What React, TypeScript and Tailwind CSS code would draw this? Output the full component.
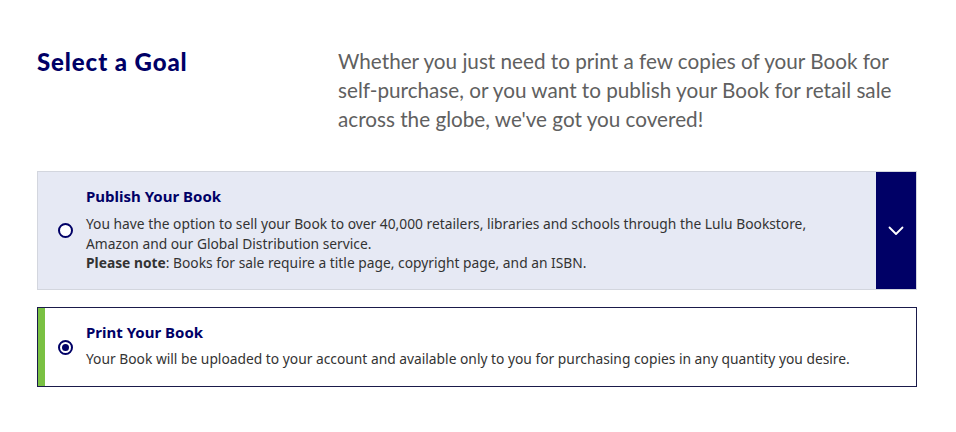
import React, { useState } from 'react';

const Radio: React.FC<{ checked: boolean }> = ({ checked }) => (
    <span className="flex h-[15px] w-[15px] items-center justify-center rounded-full border-2 border-[#000066] bg-white">
        {checked && <span className="h-[7px] w-[7px] rounded-full bg-[#000066]" />}
    </span>
);

const App: React.FC = () => {
    const [goal, setGoal] = useState<'publish' | 'print'>('print');

    return (
        <div className="min-h-[432px] bg-white pl-[37px] pr-[39px] pt-[47px] font-['Lato',sans-serif]">
            <header className="flex">
                <h1 className="w-[301px] shrink-0 pt-[1px] text-[24px] font-black leading-[28px] tracking-[0.9px] text-[#000066]">
                    Select a Goal
                </h1>
                <p className="w-[578px] text-[20.7px] leading-[29px] font-normal text-[#606060]">
                    Whether you just need to print a few copies of your Book for self&#8209;purchase, or you want to publish your Book for retail sale across the globe, we've got you covered!
                </p>
            </header>

            <div className="mt-[37px] flex flex-col gap-[17px] font-['Noto_Sans',sans-serif] text-[13.8px]">
                <div
                    onClick={() => setGoal('publish')}
                    className={`flex h-[119px] cursor-pointer border ${goal === 'publish' ? 'border-[#1a1a4a] bg-white' : 'border-[#d3d6de] bg-[#e6e9f4]'}`}
                >
                    <div className={`w-[7px] shrink-0 ${goal === 'publish' ? 'bg-[#7ac143]' : ''}`} />
                    <div className="flex w-[41px] shrink-0 items-center justify-center">
                        <Radio checked={goal === 'publish'} />
                    </div>
                    <div className="flex-1 pt-[14px] pr-6">
                        <h2 className="text-[15px] font-bold leading-[20px] text-[#000066]">Publish Your Book</h2>
                        <p className="mt-[8px] max-w-[735px] leading-[19.5px] text-[#333]">
                            You have the option to sell your Book to over 40,000 retailers, libraries and schools through the Lulu Bookstore, Amazon and our Global Distribution service.
                            <br />
                            <span className="font-bold">Please note</span>: Books for sale require a title page, copyright page, and an ISBN.
                        </p>
                    </div>
                    <button className="flex w-[40px] shrink-0 items-center justify-center bg-[#000066]">
                        <svg width="16" height="10" viewBox="0 0 16 10" fill="none">
                            <path d="M1.5 1.5L8 8l6.5-6.5" stroke="white" strokeWidth="1.8" strokeLinecap="round" strokeLinejoin="round" />
                        </svg>
                    </button>
                </div>

                <div
                    onClick={() => setGoal('print')}
                    className={`flex h-[80px] cursor-pointer border ${goal === 'print' ? 'border-[#1a1a4a] bg-white' : 'border-[#d3d6de] bg-[#e6e9f4]'}`}
                >
                    <div className={`w-[7px] shrink-0 ${goal === 'print' ? 'bg-[#7ac143]' : ''}`} />
                    <div className="flex w-[41px] shrink-0 items-center justify-center">
                        <Radio checked={goal === 'print'} />
                    </div>
                    <div className="flex-1 pt-[14px] pr-6">
                        <h2 className="text-[15px] font-bold leading-[20px] text-[#000066]">Print Your Book</h2>
                        <p className="mt-[7px] leading-[19.5px] text-[#333]">
                            Your Book will be uploaded to your account and available only to you for purchasing copies in any quantity you desire.
                        </p>
                    </div>
                </div>
            </div>
        </div>
    );
};

export default App;
